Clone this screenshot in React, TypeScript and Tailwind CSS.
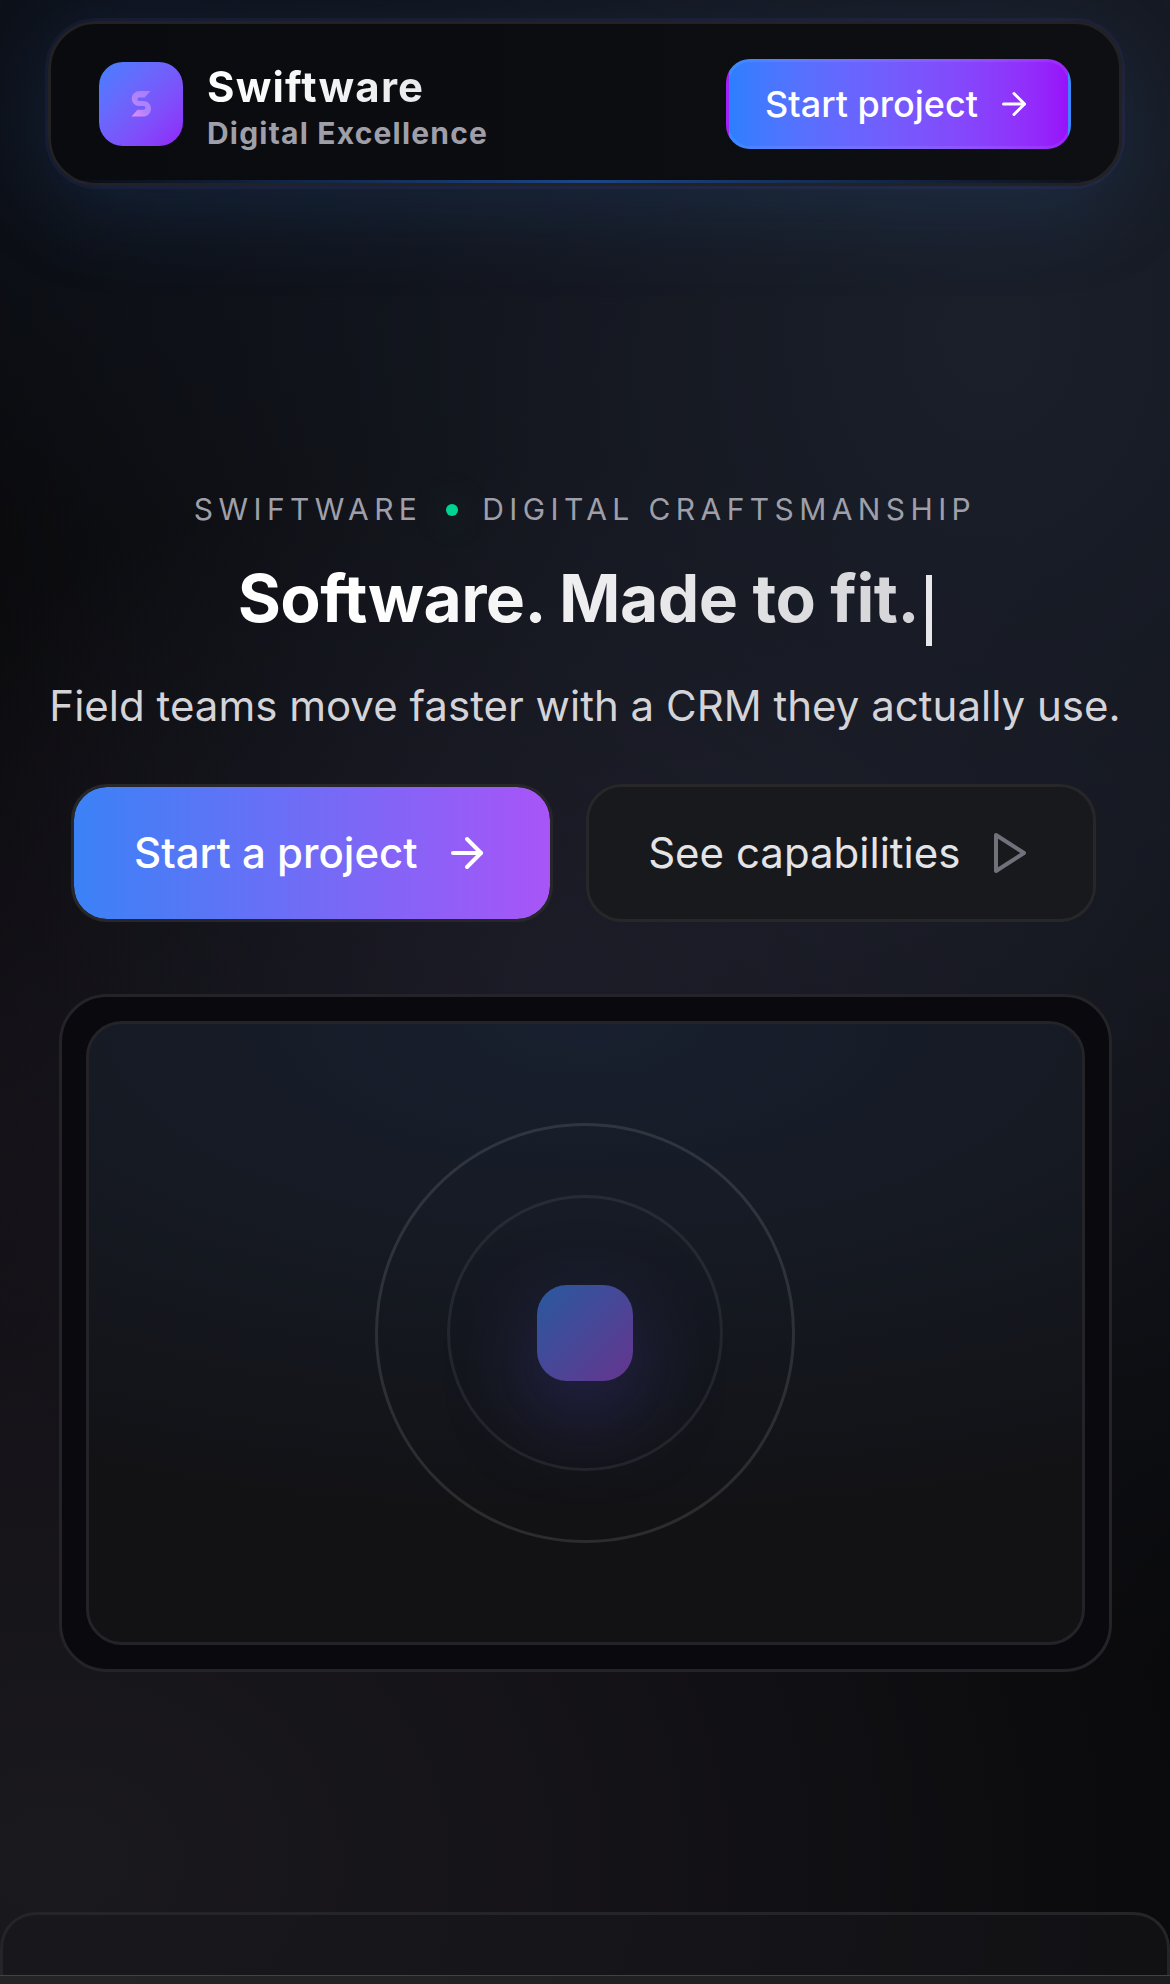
import { ArrowRight } from "lucide-react";

function Mark() {
  return (
    <svg viewBox="0 0 20 26" className="h-[26px] w-5" fill="none">
      <defs>
        <linearGradient id="mark" x1="1" y1="0" x2="0.1" y2="1">
          <stop offset="0" stopColor="#a97bfc" />
          <stop offset="0.6" stopColor="#b184fa" />
          <stop offset="1" stopColor="#e88af5" />
        </linearGradient>
      </defs>
      <path
        d="M19.500 0H9C4.200 0 .8 3.200.8 7.500c0 4.300 3.200 7.500 7.700 7.500h4c1.200 0 1.900.7 1.900 1.800s-.7 1.900-1.900 1.900H6.500L.5 25.500H12c4.700 0 8-3.300 8-7.800 0-4.500-3.100-7.700-7.600-7.700H8.300c-1.200 0-1.900-.7-1.900-1.700 0-1.100.8-1.900 2-1.900h5.300z"
        fill="url(#mark)"
      />
    </svg>
  );
}

function Header() {
  return (
    <header className="relative mx-12 mt-[21px] flex h-[165px] items-center justify-between rounded-[48px] border-[3px] border-[#222225] bg-linear-to-r from-[#0a0b0e] to-[#0d0f13] px-12 shadow-[0_0_0_3px_rgba(110,85,230,0.08),0_24px_90px_rgba(50,110,190,0.19)]">
      <div className="flex items-center gap-6">
        <div className="mt-px flex size-[84px] items-center justify-center rounded-3xl bg-linear-to-br from-[#3f80ff] to-[#9022f8]">
          <Mark />
        </div>
        <div className="flex flex-col pt-[13px]">
          <span className="bg-linear-to-r from-white to-[#e4e4e7] bg-clip-text text-[42px] leading-[46px] font-bold tracking-[1.15px] text-transparent">
            Swiftware
          </span>
          <span className="text-[30px] leading-[46px] font-bold tracking-[1.2px] text-[#9f9fa9]">
            Digital Excellence
          </span>
        </div>
      </div>
      <button className="mt-px flex h-[90px] items-center gap-[18px] rounded-3xl border-[3px] border-white/7 bg-linear-to-r from-[#2b7fff] to-[#9810fa] px-9 text-4xl font-medium text-white">
        <span className="-mt-px">Start project</span>
        <ArrowRight className="size-9" strokeWidth={2} />
      </button>
      <div className="absolute inset-x-0 bottom-0 h-[3px] bg-linear-to-r from-transparent via-[#2b7fff]/50 to-transparent" />
    </header>
  );
}

function Hero() {
  return (
    <main className="flex flex-col items-center">
      <div className="mt-[301px] flex h-[45px] items-center gap-6 text-[30px] tracking-[5.4px] text-[#9f9fa9]">
        <span>SWIFTWARE</span>
        <span className="size-3 rounded-full bg-[#00d492] shadow-[0_0_36px_rgba(0,212,146,0.35)]" />
        <span>DIGITAL CRAFTSMANSHIP</span>
      </div>
      <h1 className="mt-[30px] flex h-[73px] items-center gap-[7.500px] text-[66px] font-bold tracking-[-0.59px] whitespace-nowrap">
        <span className="-mt-0.5 bg-linear-to-r from-white from-20% to-[#d4d4d8] bg-clip-text leading-[84px] text-transparent">
          Software. Made to fit.
        </span>
        <span className="mt-6 h-[71px] w-1.5 bg-[#e8e8ea]" />
      </h1>
      <p className="mt-[37px] text-[42px] leading-[67px] tracking-[0.01px] whitespace-nowrap text-[#d4d4d8]">
        Field teams move faster with a CRM they actually use.
      </p>
      <div className="mt-[45px] flex gap-[33px] pr-[3px] text-[42px]">
        <button className="flex h-[138px] items-center gap-[25.5px] rounded-[36px] border-[3px] border-[#27272a] bg-linear-to-r/srgb from-[#3b82f6] to-[#a855f7] bg-clip-padding pr-[58.5px] pl-[60px] font-medium text-white">
          <span className="-mt-0.5">Start a project</span>
          <ArrowRight className="size-12" strokeWidth={2} />
        </button>
        <button className="flex h-[138px] items-center gap-[25.5px] rounded-[36px] border-[3px] border-[#27272a] bg-[#18191d] pr-[59px] pl-[59.5px] text-[#e4e4e7]">
          <span className="-mt-0.5">See capabilities</span>
          <svg
            viewBox="0 0 24 24"
            className="size-12 text-[#71717b]"
            fill="none"
            stroke="currentColor"
            strokeWidth="2"
            strokeLinecap="round"
            strokeLinejoin="round"
          >
            <polygon points="5 3 19 12 5 21 5 3" />
          </svg>
        </button>
      </div>
      <Preview />
    </main>
  );
}

function Preview() {
  return (
    <div className="mt-[72px] w-[1053px] rounded-[48px] border-[3px] border-[#242428] bg-[#0a090d] p-6">
      <div className="grid h-[624px] place-items-center overflow-hidden rounded-[36px] border-[3px] border-[#242428] bg-[#121215] bg-[radial-gradient(ellipse_115%_80%_at_50%_0%,#181f2e_0%,#161b25_38%,#121215_100%)] *:col-start-1 *:row-start-1">
        <div className="size-[420px] rounded-full border-[3px] border-white/11" />
        <div className="size-[276px] rounded-full border-[3px] border-white/7" />
        <div className="size-24 rounded-[30px] bg-linear-to-br/srgb from-[#29599f] to-[#66358f] shadow-[0_30px_90px_rgba(80,70,200,0.36)]" />
      </div>
    </div>
  );
}

export default function App() {
  return (
    <div className="flex h-[1984px] w-[1170px] flex-col overflow-hidden bg-[#09090b] bg-[radial-gradient(ellipse_700px_520px_at_100px_20px,rgba(15,21,33,0.75)_0%,transparent_100%),radial-gradient(ellipse_760px_520px_at_47%_980px,rgba(38,36,52,0.55)_0%,transparent_100%),radial-gradient(ellipse_300px_640px_at_0px_1120px,rgba(30,23,32,0.3)_0%,transparent_100%),radial-gradient(ellipse_1060px_1350px_at_990px_330px,#1a1f2a_0%,rgba(24,28,38,0.75)_45%,transparent_100%),radial-gradient(ellipse_1180px_940px_at_60px_1860px,#1a191e_0%,rgba(24,22,28,0.75)_45%,transparent_100%)] font-[Inter,sans-serif]">
      <Header />
      <Hero />
      <section className="mt-60 h-[63px] shrink-0 rounded-t-[36px] border-[3px] border-b-0 border-[#252529] bg-[#18181b]/50" />
      <footer className="h-[9px] shrink-0 border-t border-[#424245] bg-linear-to-r from-[#242427] to-[#1d1d1f]" />
    </div>
  );
}
